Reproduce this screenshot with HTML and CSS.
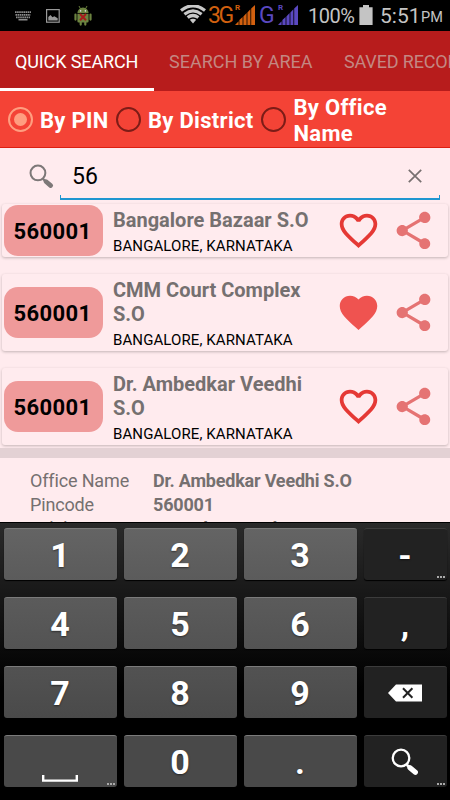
FILE: index.html
```html
<!DOCTYPE html>
<html lang="en">
<head>
    <meta charset="UTF-8">
    <meta name="viewport" content="width=device-width, initial-scale=1.0">
    <title>Pincode Search</title>
    <link rel="stylesheet" href="styles.css">
</head>
<body>
    <svg class="defs" width="0" height="0">
        <symbol id="heart-outline" viewBox="0 0 24 24">
            <path d="M16.5 3c-1.74 0-3.41.81-4.5 2.09C10.91 3.81 9.24 3 7.5 3 4.42 3 2 5.42 2 8.5c0 3.78 3.4 6.86 8.55 11.54L12 21.35l1.45-1.32C18.6 15.36 22 12.28 22 8.5 22 5.42 19.58 3 16.5 3zm-4.4 15.55l-.1.1-.1-.1C7.14 14.24 4 11.39 4 8.5 4 6.5 5.5 5 7.5 5c1.54 0 3.04.99 3.57 2.36h1.87C13.46 5.99 14.96 5 16.5 5c2 0 3.5 1.5 3.5 3.5 0 2.89-3.14 5.74-7.9 10.05z"/>
        </symbol>
        <symbol id="heart" viewBox="0 0 24 24">
            <path d="M12 21.35l-1.45-1.32C5.4 15.36 2 12.28 2 8.5 2 5.42 4.42 3 7.5 3c1.74 0 3.41.81 4.5 2.09C13.09 3.81 14.76 3 16.5 3 19.58 3 22 5.42 22 8.5c0 3.78-3.4 6.86-8.55 11.54L12 21.35z"/>
        </symbol>
        <symbol id="share" viewBox="0 0 24 24">
            <path d="M18 16.08c-.76 0-1.44.3-1.96.77L8.91 12.7c.05-.23.09-.46.09-.7s-.04-.47-.09-.7l7.05-4.11c.54.5 1.25.81 2.04.81 1.66 0 3-1.34 3-3s-1.34-3-3-3-3 1.34-3 3c0 .24.04.47.09.7L8.04 9.81C7.5 9.31 6.79 9 6 9c-1.66 0-3 1.34-3 3s1.34 3 3 3c.79 0 1.5-.31 2.04-.81l7.12 4.16c-.05.21-.08.43-.08.65 0 1.61 1.31 2.92 2.92 2.92 1.61 0 2.92-1.31 2.92-2.92s-1.31-2.92-2.92-2.92z"/>
        </symbol>
        <symbol id="signal" viewBox="0 0 20 20">
            <path d="M0 20L3.6 16.2V20zM4.4 20V15L7.6 12V20zM8.4 20V11.4L11.6 8V20zM12.4 20V7.4L15.4 4.2V20zM16.2 20V3.4L20 0V20z"/>
        </symbol>
        <symbol id="magnifier" viewBox="0 0 26 26">
            <circle cx="9.3" cy="9.3" r="7.7" fill="none" stroke="currentColor" stroke-width="2.1"/>
            <path d="M14.6 15.6L17.6 18.4" stroke="currentColor" stroke-width="2.4"/>
            <path d="M17.6 18.3L22.6 22.5" stroke="currentColor" stroke-width="4.8" stroke-linecap="round"/>
        </symbol>
    </svg>

    <div class="status-bar">
        <svg class="icon-keyboard" width="16" height="10" viewBox="0 0 16 10">
            <path d="M0 1.2h16M.5 3.8h15M1 6.4h14" stroke="#8c8c8c" stroke-width="1.7" stroke-dasharray="1.6 .5"/>
            <path d="M3.5 8.7h9" stroke="#8c8c8c" stroke-width="1.6"/>
        </svg>
        <svg class="icon-image" width="14" height="14" viewBox="0 0 14 14">
            <rect x=".6" y=".6" width="12.6" height="12.6" fill="none" stroke="#999" stroke-width="1.2"/>
            <path d="M2.3 11.5V8l2.2-2 2 2.2 1.8-1 3.4 2v2.3z" fill="#999"/>
        </svg>
        <svg class="icon-android" width="18" height="20" viewBox="0 0 18 20">
            <path d="M5 0l1.6 3M13 0l-1.6 3" stroke="#667d3c" stroke-width="1"/>
            <path d="M3.4 7a5.6 5.4 0 0 1 11.2 0zM3.4 7.8h11.2v7.4q0 1.3-1.3 1.3H4.7q-1.3 0-1.3-1.3z" fill="#6c8340"/>
            <path d="M1.5 8.6v5M16.5 8.6v5M6.7 15v3.6M11.3 15v3.6" stroke="#6c8340" stroke-width="2.2" stroke-linecap="round"/>
            <circle cx="6.6" cy="4.9" r=".8" fill="#ddd"/>
            <circle cx="11.4" cy="4.9" r=".8" fill="#ddd"/>
            <path d="M6 8l6 6.2M12 8l-6 6.2" stroke="#a81c1c" stroke-width="2"/>
        </svg>
        <svg class="icon-wifi" width="26" height="19" viewBox="0 0 26 19">
            <path d="M1 5.4Q13-3.8 25 5.4M4.4 9.2q8.6-6.6 17.2 0M7.6 12.6q5.4-4.2 10.8 0" fill="none" stroke="#c8c8c8" stroke-width="3.2"/>
            <path d="M13 18.6L9.8 14.8q3.2-2.2 6.4 0z" fill="#c8c8c8"/>
        </svg>
        <span class="network net-3g">3G</span>
        <span class="signal orange"><b>R</b><svg width="20" height="20"><use href="#signal"/></svg></span>
        <span class="network net-g">G</span>
        <span class="signal purple"><b>R</b><svg width="20" height="20"><use href="#signal"/></svg></span>
        <span class="battery-text">100%</span>
        <svg class="icon-battery" width="14" height="20" viewBox="0 0 14 20">
            <path d="M4 0h6v2.3h3.6V20H.4V2.3H4z" fill="#c4c4c4"/>
        </svg>
        <span class="time">5:51</span>
        <span class="ampm">PM</span>
    </div>

    <nav class="tabs">
        <div class="tab tab-quick active">QUICK SEARCH</div>
        <div class="tab tab-area">SEARCH BY AREA</div>
        <div class="tab tab-saved">SAVED RECORDS</div>
    </nav>

    <div class="filters">
        <div class="filter filter-pin"><span class="radio checked"></span><span class="filter-text">By PIN</span></div>
        <div class="filter filter-district"><span class="radio"></span><span class="filter-text">By District</span></div>
        <div class="filter filter-office"><span class="radio"></span><span class="filter-text">By Office<br>Name</span></div>
    </div>

    <div class="search">
        <svg class="search-icon" width="25" height="25"><use href="#magnifier"/></svg>
        <div class="search-field">
            <span class="search-text">56</span>
            <svg class="clear-icon" width="14" height="14" viewBox="0 0 14 14">
                <path d="M.8.8l12.4 12.4M13.2.8L.8 13.2" stroke="#777070" stroke-width="1.7"/>
            </svg>
        </div>
    </div>

    <div class="results">
        <div class="card">
            <div class="pin">560001</div>
            <div class="office">
                <div class="office-name">Bangalore Bazaar S.O</div>
                <div class="office-area">BANGALORE, KARNATAKA</div>
            </div>
            <svg class="fav" width="45" height="45"><use href="#heart-outline"/></svg>
            <svg class="share" width="45" height="45"><use href="#share"/></svg>
        </div>
        <div class="card">
            <div class="pin">560001</div>
            <div class="office">
                <div class="office-name">CMM Court Complex<br>S.O</div>
                <div class="office-area">BANGALORE, KARNATAKA</div>
            </div>
            <svg class="fav saved" width="45" height="45"><use href="#heart"/></svg>
            <svg class="share" width="45" height="45"><use href="#share"/></svg>
        </div>
        <div class="card">
            <div class="pin">560001</div>
            <div class="office">
                <div class="office-name">Dr. Ambedkar Veedhi<br>S.O</div>
                <div class="office-area">BANGALORE, KARNATAKA</div>
            </div>
            <svg class="fav" width="45" height="45"><use href="#heart-outline"/></svg>
            <svg class="share" width="45" height="45"><use href="#share"/></svg>
        </div>
    </div>

    <div class="details">
        <div class="label">Office Name</div><div class="value">Dr. Ambedkar Veedhi S.O</div>
        <div class="label">Pincode</div><div class="value">560001</div>
        <div class="label">Taluk</div><div class="value">Bangalore North</div>
    </div>

    <div class="keyboard">
        <div class="key">1</div>
        <div class="key">2</div>
        <div class="key">3</div>
        <div class="key dark more">-</div>
        <div class="key row2">4</div>
        <div class="key row2">5</div>
        <div class="key row2">6</div>
        <div class="key dark">,</div>
        <div class="key row3">7</div>
        <div class="key row3">8</div>
        <div class="key row3">9</div>
        <div class="key dark">
            <svg width="34" height="18" viewBox="0 0 34 18">
                <path d="M0 9L8 .5H34v17H8z" fill="#fff"/>
                <path d="M15 4.2l9.4 9.6M24.4 4.2L15 13.8" stroke="#222" stroke-width="2"/>
            </svg>
        </div>
        <div class="key row4 more">
            <svg class="space-icon" width="36" height="7" viewBox="0 0 36 7">
                <path d="M1.2 0v5.6h33.6V0" fill="none" stroke="#fff" stroke-width="2.4"/>
            </svg>
        </div>
        <div class="key row4">0</div>
        <div class="key row4">.</div>
        <div class="key dark more">
            <svg class="key-search" width="28" height="28"><use href="#magnifier"/></svg>
        </div>
    </div>
</body>
</html>
```
FILE: styles.css
```css
* {
    box-sizing: border-box;
}
body {
    font-family: Roboto, "Liberation Sans", sans-serif;
    margin: 0;
    width: 450px;
    height: 800px;
    overflow: hidden;
    background-color: #ffebee;
    color: #000;
    display: flex;
    flex-direction: column;
}
svg {
    display: block;
    flex: none;
}
.defs {
    position: absolute;
}

/* status bar */
.status-bar {
    height: 31px;
    flex: none;
    background-color: #000;
    color: #c4c4c4;
    display: flex;
    align-items: center;
    white-space: nowrap;
}
.status-bar > * {
    flex: none;
}
.icon-keyboard {
    margin-left: 15px;
}
.icon-image {
    margin-left: 15px;
}
.icon-android {
    margin-left: 14px;
}
.icon-wifi {
    margin-left: 88px;
    margin-top: -3px;
}
.network {
    font-size: 23px;
    line-height: 31px;
}
.net-3g {
    width: 27px;
    margin-left: 2px;
    color: #d2600f;
    letter-spacing: -2.5px;
}
.net-g {
    width: 19px;
    margin-left: 4px;
    color: #5a48c0;
}
.signal {
    position: relative;
    fill: currentColor;
    margin-top: -1px;
}
.signal b {
    position: absolute;
    left: 0;
    top: -2px;
    font-size: 8px;
    line-height: 9px;
}
.orange {
    color: #d2600f;
}
.purple {
    color: #5a48c0;
}
.battery-text {
    width: 51px;
    margin-left: 10px;
    padding-top: 1px;
    font-size: 20px;
    letter-spacing: -0.5px;
}
.icon-battery {
    margin-top: -1px;
}
.time {
    width: 41px;
    margin-left: 7px;
    font-size: 21px;
}
.ampm {
    font-size: 14.5px;
    padding-top: 4px;
}

/* tabs */
.tabs {
    height: 60px;
    flex: none;
    display: flex;
    overflow: hidden;
    background-color: #b71c1c;
    color: #c48782;
    font-size: 18px;
    line-height: 62px;
    white-space: nowrap;
}
.tab {
    flex: none;
    padding-left: 15px;
}
.tab-quick {
    width: 154px;
    letter-spacing: -0.12px;
}
.tab-area {
    width: 175px;
}
.tab-saved {
    letter-spacing: -0.15px;
}
.tab.active {
    color: #fff;
    border-bottom: 3px solid #fff;
}

/* search type */
.filters {
    height: 57px;
    flex: none;
    display: flex;
    background-color: #f44336;
    border-bottom: 1px solid #dc1f12;
    color: #fff;
    font-size: 22px;
    font-weight: bold;
    line-height: 26px;
    letter-spacing: 0.3px;
    white-space: nowrap;
    padding-left: 7.5px;
}
.filter {
    display: flex;
    align-items: center;
    gap: 7.5px;
}
.filter-pin {
    width: 108px;
}
.filter-district {
    width: 145.5px;
}
.filter-text {
    padding-top: 4px;
}
.radio {
    width: 25px;
    height: 25px;
    flex: none;
    border: 2.5px solid #7c1c17;
    border-radius: 50%;
    display: flex;
}
.radio.checked {
    border-color: #ff9e80;
}
.radio.checked::after {
    content: "";
    width: 13px;
    height: 13px;
    margin: auto;
    border-radius: 50%;
    background-color: #ff9e80;
}

/* search box */
.search {
    height: 56px;
    flex: none;
    display: flex;
    padding-left: 29px;
}
.search-icon {
    color: #7d7878;
    margin-top: 16px;
}
.search-field {
    width: 380px;
    height: 52px;
    margin-left: 6px;
    padding: 7px 18px 0 12px;
    display: flex;
    align-items: center;
    justify-content: space-between;
    background: linear-gradient(#1e96d0, #1e96d0) left bottom / 1px 3px no-repeat,
                linear-gradient(#1e96d0, #1e96d0) right bottom / 1px 3px no-repeat;
    border-bottom: 2px solid #1e96d0;
}
.search-text {
    font-size: 23px;
}
.clear-icon {
    margin-top: -2px;
}

/* result cards */
.results {
    flex: none;
    height: 244px;
    padding: 0 2px;
    display: flex;
    flex-direction: column;
    gap: 17px;
}
.card {
    display: flex;
    align-items: center;
    padding: 0 2px;
    border-radius: 3px;
    box-shadow: 0 1px 3px rgba(0, 0, 0, 0.24);
}
.pin {
    width: 99px;
    height: 51px;
    flex: none;
    border-radius: 14px;
    background-color: #ef9a9a;
    font-size: 22px;
    font-weight: bold;
    line-height: 53px;
    letter-spacing: 0.35px;
    padding-right: 2px;
    text-align: center;
}
.office {
    width: 233px;
    flex: none;
    padding: 4px 0 2px 10px;
    white-space: nowrap;
}
.office-name {
    font-size: 20px;
    font-weight: bold;
    line-height: 24px;
    color: #757070;
}
.office-area {
    font-size: 15px;
    line-height: 18px;
    letter-spacing: 0.1px;
    padding-top: 5px;
}
.fav {
    fill: #e53935;
}
.fav.saved {
    fill: #ef5350;
}
.share {
    margin-left: 10px;
    fill: #e57373;
}

/* selected office */
.details {
    height: 74px;
    flex: none;
    overflow: hidden;
    border-top: 10px solid #e3d1d4;
    padding: 11px 0 0 30px;
    display: grid;
    grid-template-columns: 123px 1fr;
    grid-auto-rows: 24px;
    font-size: 18px;
    line-height: 24px;
    letter-spacing: -0.15px;
    color: #757070;
    white-space: nowrap;
}
.value {
    font-weight: bold;
    letter-spacing: -0.2px;
}

/* number pad */
.keyboard {
    flex: 1;
    padding: 5px 3.5px 0;
    border-top: 1px solid #000;
    display: grid;
    grid-template-columns: 113px 113px 113px 83px;
    grid-auto-rows: 52px;
    column-gap: 7px;
    row-gap: 17px;
    background: linear-gradient(#2a2a2a, #000 60%);
}
.key {
    position: relative;
    display: flex;
    align-items: center;
    justify-content: center;
    border-radius: 3px;
    border-top: 1px solid #7b7b7b;
    background: linear-gradient(#646464, #5b5b5b);
    box-shadow: 0 1px 1px #000;
    color: #fff;
    font-size: 34px;
    font-weight: bold;
    text-shadow: 0 1px 2px rgba(0, 0, 0, 0.5);
}
.key.row2 {
    background: linear-gradient(#5b5b5b, #535353);
}
.key.row3 {
    background: linear-gradient(#525252, #4a4a4a);
}
.key.row4 {
    background: #494949;
}
.key.dark {
    background: #222;
    border-top-color: #3c3c3c;
}
.key.more::after {
    content: "";
    position: absolute;
    right: 2px;
    bottom: 2px;
    width: 8px;
    height: 2px;
    background: repeating-linear-gradient(90deg, #aaa 0 2px, transparent 2px 3px);
}
.space-icon {
    margin-top: 34px;
}
```
